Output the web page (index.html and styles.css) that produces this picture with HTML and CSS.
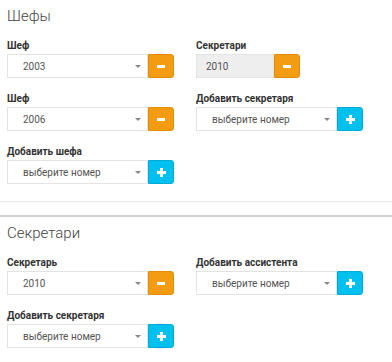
FILE: index.html
```html
<!DOCTYPE html>
<html lang="ru">
<head>
  <meta charset="UTF-8">
  <meta name="viewport" content="width=device-width, initial-scale=1.0">
  <title>Шефы и секретари</title>
  <link rel="stylesheet" href="styles.css">
</head>
<body>
<div class="box box-first">
  <h3 class="box-title">Шефы</h3>
  <div class="fields">
    <div class="form-group">
      <label>Шеф</label>
      <div class="input-group">
        <div class="select"><span>2003</span><i class="caret"></i></div>
        <button class="btn btn-remove" type="button"><i class="minus"></i></button>
      </div>
    </div>
    <div class="form-group">
      <label>Секретари</label>
      <div class="input-group">
        <input class="field field-short" type="text" value="2010" disabled>
        <button class="btn btn-remove" type="button"><i class="minus"></i></button>
      </div>
    </div>
    <div class="form-group">
      <label>Шеф</label>
      <div class="input-group">
        <div class="select"><span>2006</span><i class="caret"></i></div>
        <button class="btn btn-remove" type="button"><i class="minus"></i></button>
      </div>
    </div>
    <div class="form-group">
      <label>Добавить секретаря</label>
      <div class="input-group">
        <div class="select"><span>выберите номер</span><i class="caret"></i></div>
        <button class="btn btn-add" type="button"><i class="plus"></i></button>
      </div>
    </div>
    <div class="form-group">
      <label>Добавить шефа</label>
      <div class="input-group">
        <div class="select"><span>выберите номер</span><i class="caret"></i></div>
        <button class="btn btn-add" type="button"><i class="plus"></i></button>
      </div>
    </div>
  </div>
</div>

<div class="box box-second">
  <h3 class="box-title">Секретари</h3>
  <div class="fields">
    <div class="form-group">
      <label>Секретарь</label>
      <div class="input-group">
        <div class="select"><span>2010</span><i class="caret"></i></div>
        <button class="btn btn-remove" type="button"><i class="minus"></i></button>
      </div>
    </div>
    <div class="form-group">
      <label>Добавить ассистента</label>
      <div class="input-group">
        <div class="select"><span>выберите номер</span><i class="caret"></i></div>
        <button class="btn btn-add" type="button"><i class="plus"></i></button>
      </div>
    </div>
    <div class="form-group">
      <label>Добавить секретаря</label>
      <div class="input-group">
        <div class="select"><span>выберите номер</span><i class="caret"></i></div>
        <button class="btn btn-add" type="button"><i class="plus"></i></button>
      </div>
    </div>
  </div>
</div>
</body>
</html>
```

FILE: styles.css
```css
body {
  font-family: Roboto, "Liberation Sans", Arial, sans-serif;
  background-color: #fff;
  margin: 0;
  padding: 0;
  color: #333;
}

.box {
  background-color: #fff;
  padding: 8px 7px 3px 7px;
}

.box-first {
  box-shadow: 0 1px 1px rgba(0, 0, 0, 0.08);
  margin-bottom: 14px;
}

.box-second {
  border-top: 2px solid #cfcfcf;
}

.box-title {
  margin: 0 0 15px 0;
  font-size: 15px;
  line-height: 16px;
  font-weight: 300;
  color: #444;
}

.fields {
  display: grid;
  grid-template-columns: 189px 1fr;
}

.form-group {
  margin-bottom: 14px;
}

label {
  display: block;
  font-size: 10px;
  line-height: 13px;
  font-weight: bold;
  color: #333;
  margin-bottom: 2px;
}

.input-group {
  display: flex;
  height: 24px;
}

.select,
.field {
  box-sizing: border-box;
  height: 24px;
  border: 1px solid #e3e3e3;
  font-family: inherit;
  font-size: 10px;
  color: #555;
}

.select {
  width: 141px;
  display: flex;
  align-items: center;
  padding-left: 15px;
  padding-right: 6px;
  background-color: #fff;
}

.select span {
  flex: 1;
}

.caret {
  width: 0;
  height: 0;
  border-left: 3px solid transparent;
  border-right: 3px solid transparent;
  border-top: 3px solid #888;
}

.field {
  width: 78px;
  padding: 0 0 0 9px;
  background-color: #eee;
  margin: 0;
}

.btn {
  width: 26px;
  height: 24px;
  border: 1px solid transparent;
  border-radius: 0 3px 3px 0;
  padding: 0;
  display: flex;
  align-items: center;
  justify-content: center;
  cursor: pointer;
}

.btn-remove {
  background-color: #f39c12;
  border-color: #e08e0b;
}

.btn-add {
  background-color: #00c0ef;
  border-color: #00acd6;
}

.minus {
  width: 8px;
  height: 3px;
  background-color: #fff;
}

.plus {
  position: relative;
  width: 9px;
  height: 9px;
}

.plus::before,
.plus::after {
  content: "";
  position: absolute;
  background-color: #fff;
}

.plus::before {
  left: 0;
  top: 3px;
  width: 9px;
  height: 3px;
}

.plus::after {
  left: 3px;
  top: 0;
  width: 3px;
  height: 9px;
}
```
